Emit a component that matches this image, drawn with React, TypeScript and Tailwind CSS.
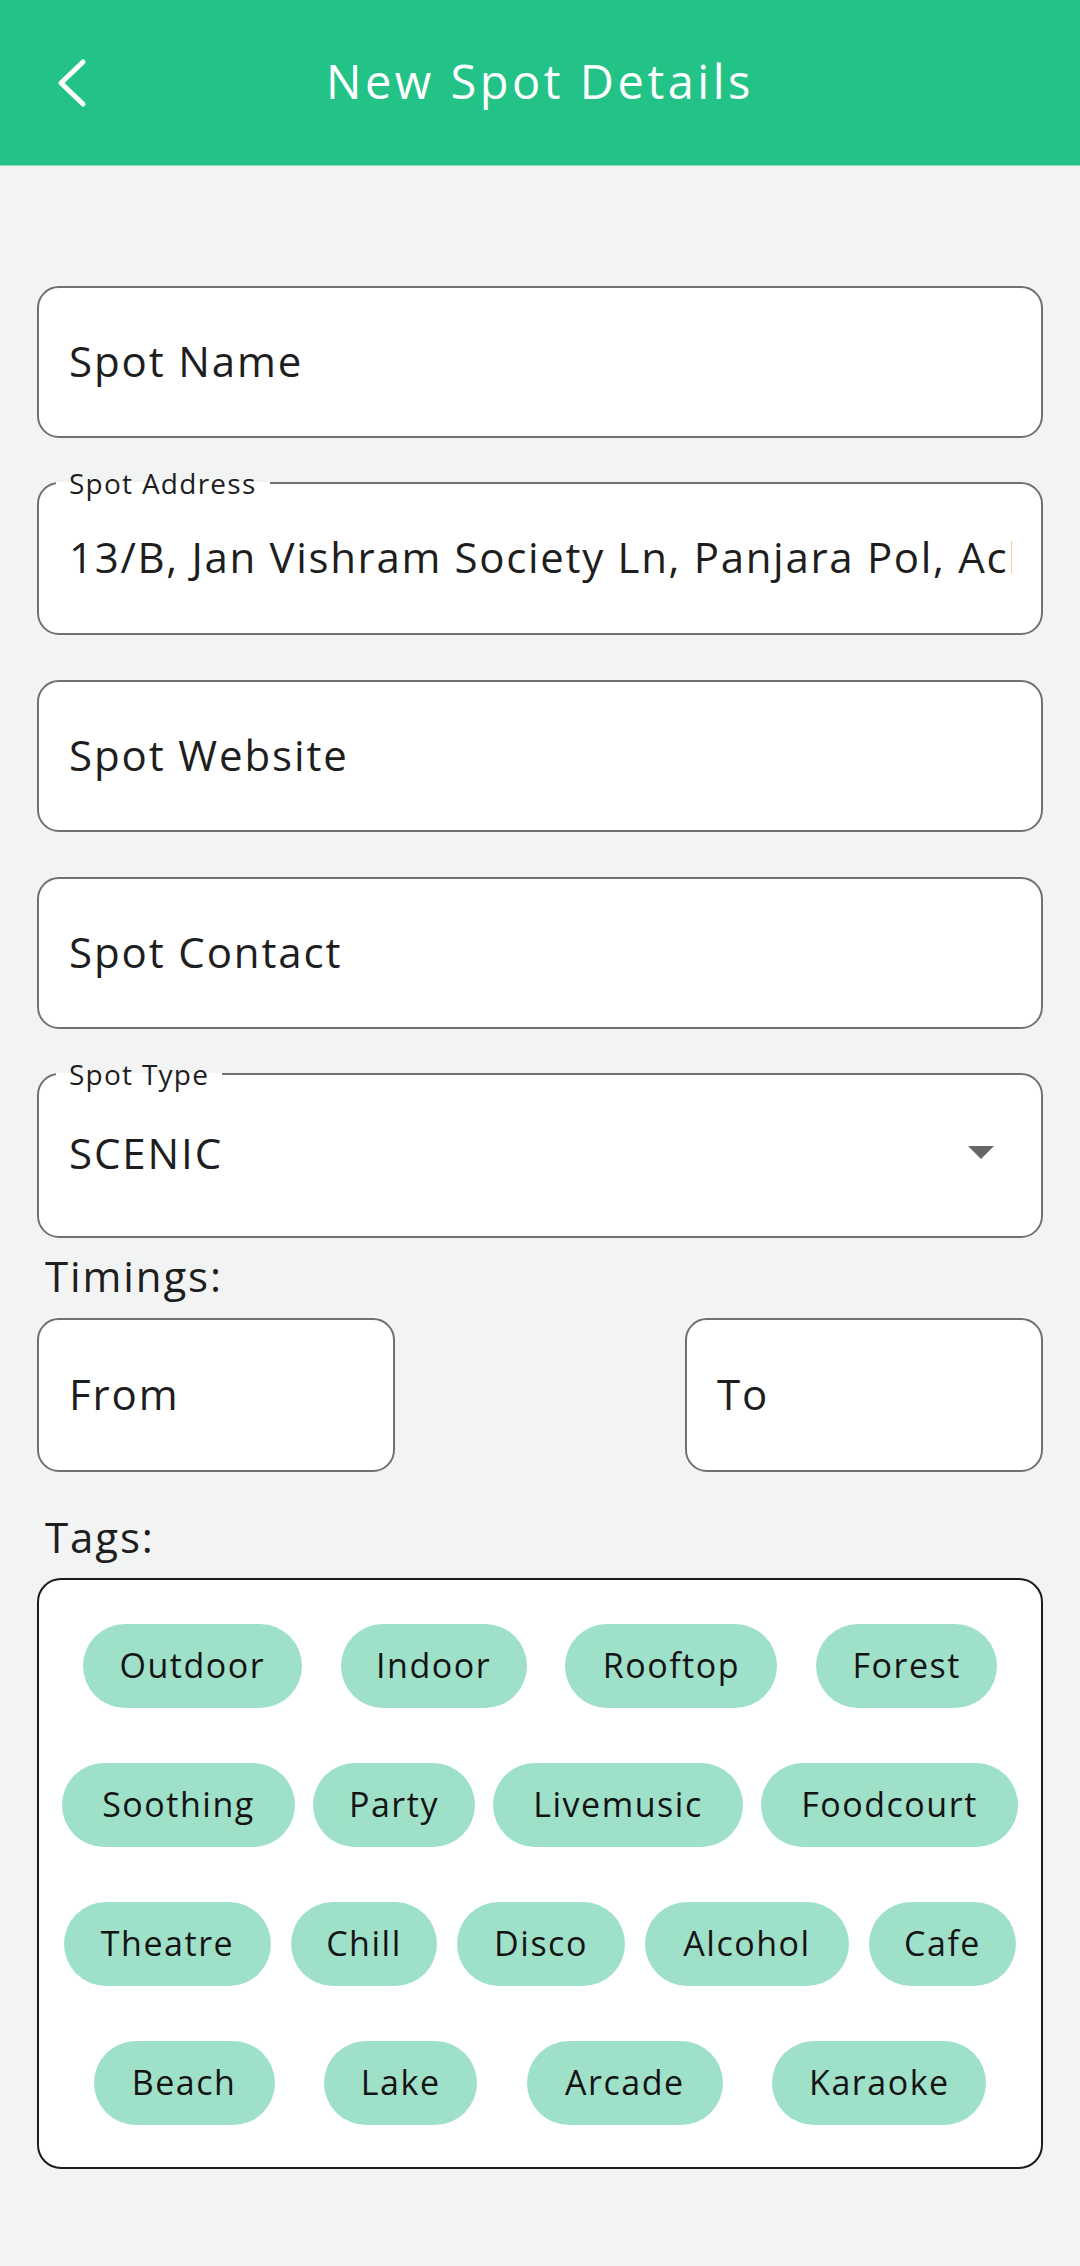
const font = { fontFamily: '"Open Sans", "Liberation Sans", sans-serif' };

const tags = [
  { name: "Outdoor", w: "w-[219px]" },
  { name: "Indoor", w: "w-[186px]" },
  { name: "Rooftop", w: "w-[212px]" },
  { name: "Forest", w: "w-[181px]" },
  { name: "Soothing", w: "w-[233px]" },
  { name: "Party", w: "w-[162px]" },
  { name: "Livemusic", w: "w-[250px]" },
  { name: "Foodcourt", w: "w-[257px]" },
  { name: "Theatre", w: "w-[207px]" },
  { name: "Chill", w: "w-[146px]" },
  { name: "Disco", w: "w-[168px]" },
  { name: "Alcohol", w: "w-[204px]" },
  { name: "Cafe", w: "w-[147px]" },
  { name: "Beach", w: "w-[181px]" },
  { name: "Lake", w: "w-[153px]" },
  { name: "Arcade", w: "w-[196px]" },
  { name: "Karaoke", w: "w-[214px]" },
];

function TextField({ placeholder, className = "" }: { placeholder: string; className?: string }) {
  return (
    <div
      className={`flex h-[152px] items-center rounded-[22px] border-2 border-[#707070] bg-white px-[30px] pb-[4px] ${className}`}
    >
      <span className="text-[42px] tracking-[0.045em] text-[#1e1e1e]">{placeholder}</span>
    </div>
  );
}

function OutlinedField({
  label,
  children,
  className = "",
}: {
  label: string;
  children: React.ReactNode;
  className?: string;
}) {
  return (
    <fieldset className={`mx-[37px] min-w-0 rounded-[22px] border-2 border-[#707070] bg-white ${className}`}>
      <legend className="ml-[17px] px-[13px] text-[28px] leading-[28px] tracking-[0.045em] text-[#1e1e1e]">
        {label}
      </legend>
      {children}
    </fieldset>
  );
}

export default function App() {
  return (
    <div className="min-h-[2266px] w-full bg-[#f2f4f3]" style={font}>
      {/* header */}
      <div className="grid h-[166px] grid-cols-[1fr_auto_1fr] items-center border-b border-[#8fdcbd] bg-[#23c287]">
        <div className="flex pl-[57px]">
          <svg width="32" height="50" viewBox="0 0 32 50" fill="none">
            <polyline
              points="26,4 4,25 26,46"
              stroke="white"
              strokeWidth="5"
              strokeLinecap="round"
              strokeLinejoin="round"
            />
          </svg>
        </div>
        <h1 className="pb-[3px] text-[47px] font-normal tracking-[0.075em] text-white">New Spot Details</h1>
        <div />
      </div>

      <TextField placeholder="Spot Name" className="mx-[37px] mt-[120px]" />

      <OutlinedField label="Spot Address" className="mt-[31px]">
        <div className="flex h-[136px] items-center pb-[18px] pl-[30px] pr-[29px]">
          <div className="min-w-0 flex-1 overflow-hidden">
            <span className="whitespace-nowrap text-[42px] tracking-[0.04em] text-[#1e1e1e]">
              13/B, Jan Vishram Society Ln, Panjara Pol, Acharya Narendradev Nagar
            </span>
          </div>
        </div>
      </OutlinedField>

      <TextField placeholder="Spot Website" className="mx-[37px] mt-[45px]" />
      <TextField placeholder="Spot Contact" className="mx-[37px] mt-[45px]" />

      <OutlinedField label="Spot Type" className="mt-[31px]">
        <div className="flex h-[148px] items-center justify-between pb-[20px] pl-[30px] pr-[47px]">
          <span className="text-[42px] tracking-[0.045em] text-[#1e1e1e]">SCENIC</span>
          <svg width="26" height="13" viewBox="0 0 26 13">
            <polygon points="0,0 26,0 13,13" fill="#666666" />
          </svg>
        </div>
      </OutlinedField>

      <div className="mx-[45px] mt-[13px] text-[42px] leading-[50px] tracking-[0.045em] text-[#1e1e1e]">
        Timings:
      </div>
      <div className="mx-[37px] mt-[17px] flex justify-between">
        <TextField placeholder="From" className="h-[154px] w-[358px]" />
        <TextField placeholder="To" className="h-[154px] w-[358px]" />
      </div>

      <div className="mx-[45px] mt-[40px] text-[42px] leading-[50px] tracking-[0.045em] text-[#1e1e1e]">
        Tags:
      </div>
      <div className="mx-[37px] mt-[16px] rounded-[24px] border-2 border-[#1c1c1c] bg-white px-[5px] pb-[42px] pt-[44px]">
        <div className="flex flex-wrap justify-evenly gap-y-[55px]">
          {tags.map((t) => (
            <div
              key={t.name}
              className={`flex h-[84px] items-center justify-center rounded-full bg-[#9fe0c8] pb-[2px] ${t.w}`}
            >
              <span className="text-[34px] tracking-[0.045em] text-[#141414]">{t.name}</span>
            </div>
          ))}
        </div>
      </div>
    </div>
  );
}
